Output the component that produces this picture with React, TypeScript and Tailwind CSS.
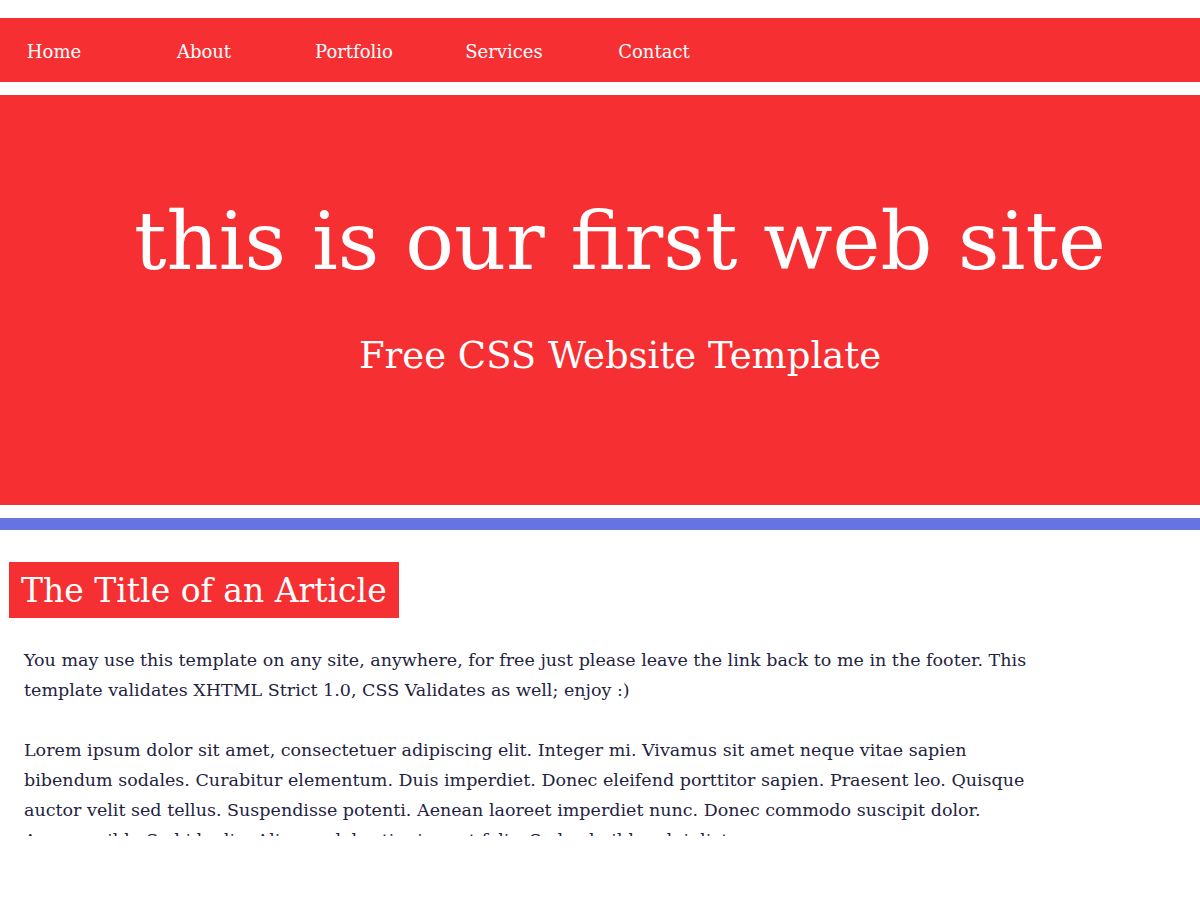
export default function App() {
  const links = ['Home', 'About', 'Portfolio', 'Services', 'Contact'];

  return (
    <div className="min-h-[900px] bg-white pt-[18px] font-['DejaVu_Serif',serif]">
      {/* nav */}
      <nav className="h-16 bg-[#f62f33]">
        <ul className="flex h-full items-center pt-[2px] -ml-[21px]">
          {links.map((l) => (
            <li key={l} className="w-[150px] text-center text-[18px] text-white">
              {l}
            </li>
          ))}
        </ul>
      </nav>

      {/* hero */}
      <header className="mt-[13px] h-[410px] bg-[#f62f33] pl-10 pt-[106px] text-center text-white">
        <h1 className="text-[81px] leading-none">this is our first web site</h1>
        <h2 className="mt-[55px] text-[37px] leading-none">Free CSS Website Template</h2>
      </header>

      <div className="mt-[13px] h-3 bg-[#6574e0]" />

      {/* article */}
      <main className="h-[306px] overflow-hidden pt-8">
        <h3 className="ml-[9px] inline-flex h-14 items-center bg-[#f62f33] px-3 pt-[2px] text-[33px] text-white">
          The Title of an Article
        </h3>
        <div className="mt-[27px] w-[1100px] pl-6 text-[17.5px] leading-[30px] text-[#1f2340]">
          <p>
            You may use this template on any site, anywhere, for free just please leave the link back to me in
            the footer. This
            <br />
            template validates XHTML Strict 1.0, CSS Validates as well; enjoy :)
          </p>
          <p className="mt-[30px]">
            Lorem ipsum dolor sit amet, consectetuer adipiscing elit. Integer mi. Vivamus sit amet neque vitae
            sapien
            <br />
            bibendum sodales. Curabitur elementum. Duis imperdiet. Donec eleifend porttitor sapien. Praesent leo.
            Quisque
            <br />
            auctor velit sed tellus. Suspendisse potenti. Aenean laoreet imperdiet nunc. Donec commodo suscipit
            dolor.
            <br />
            Aenean nibh. Sed id odio. Aliquam lobortis risus ut felis. Sed vel nibh a dui dictum.
          </p>
        </div>
      </main>
    </div>
  );
}
